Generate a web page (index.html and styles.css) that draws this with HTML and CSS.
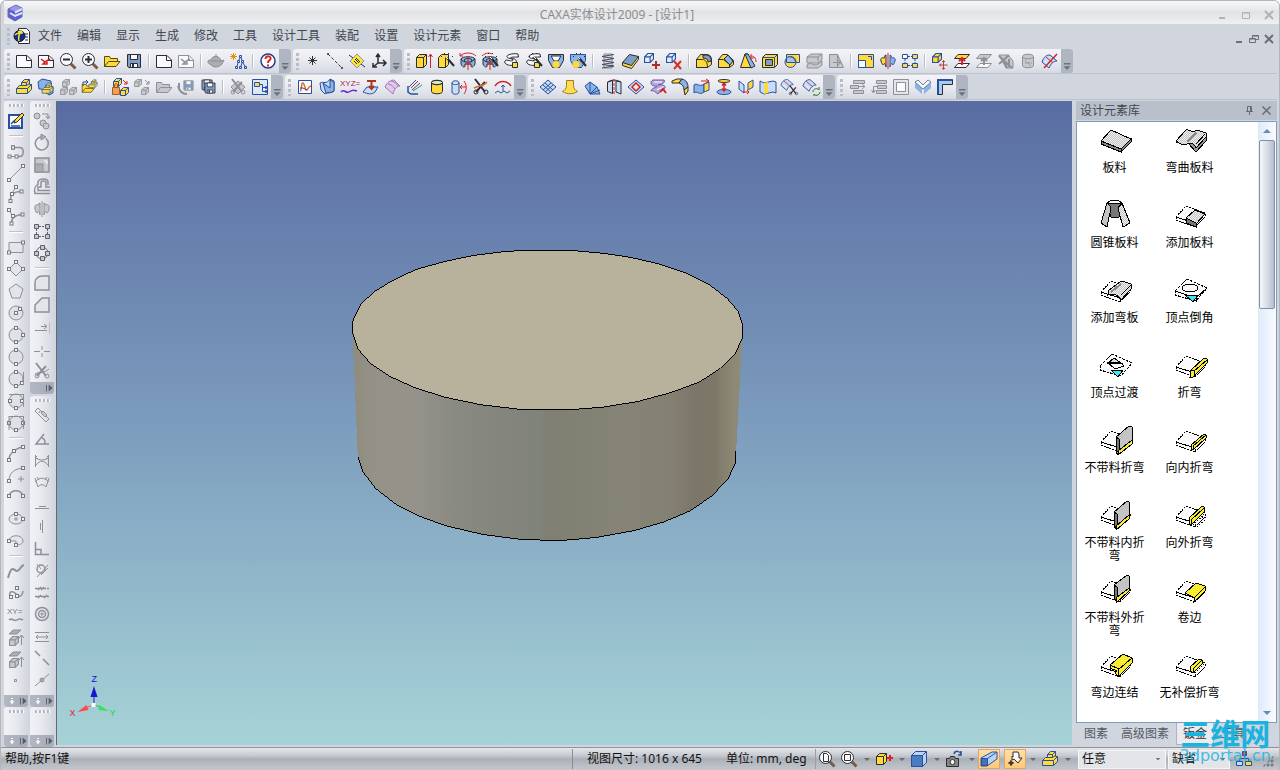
FILE: index.html
```html
<!DOCTYPE html>
<html lang="zh-CN">
<head>
<meta charset="utf-8">
<title>CAXA实体设计2009 - [设计1]</title>
<link rel="stylesheet" href="styles.css">
</head>
<body>
<svg class="defs" width="0" height="0" aria-hidden="true">
<defs>
<marker id="node" markerWidth="5" markerHeight="5" refX="2.5" refY="2.5" markerUnits="userSpaceOnUse"><rect x="1" y="1" width="3" height="3" fill="#f4f4f8" stroke="#777a80"/></marker>
<symbol id="page" viewBox="0 0 18 18"><path class="w" d="M1.500 3.500H12L16.500 8V15.500H1.500Z"/><path d="M11.500 3.500V8.500H16.500"/></symbol>
<symbol id="wand" viewBox="0 0 18 18"><path class="k2" d="M10 6L17 14"/><path class="wh" d="M9 5l2 2"/><path d="M7.500 1v2M4 4.500h2M11 1.500h2M15 4.500h2M8 8.500h1" stroke-dasharray="1 1"/></symbol>
<symbol id="cube" viewBox="0 0 9 9"><path d="M.5 3.500l3-3h5v5l-3 3h-5zM.5 3.500h5v5M5.500 3.500l3-3"/></symbol>
<symbol id="floppy" viewBox="0 0 18 18"><path class="steel" d="M2.500 2.500H15.500V15.500H3.500L2.500 14Z"/><path class="w" d="M5.500 2.500h7v5h-7z"/><path class="w" d="M5.500 11.500h7v4h-7z"/><path class="k2" d="M8 12v3"/></symbol>
<symbol id="folder" viewBox="0 0 18 18"><path d="M1.500 14.500V4.500h5l1 2h7v3"/><path d="M1.500 14.500L5.500 9.500H17L13 14.500Z"/></symbol>
<symbol id="ring" viewBox="0 0 18 18"><path class="bl" d="M2 7c1-3 13-3 14 0v5c-1 3-4 4-4 2v-2H6v2c0 2-3 1-4-2z"/><path d="M5 8c2-2 6-2 8 0l-1 2H6zM2 7c1 2 2 2 4 3M16 7l-4 3"/></symbol>
<symbol id="sweep" viewBox="0 0 18 18"><path class="w" d="M15 2C9 1 3 3 4 5s6 1 6 3-5 0-7 0L1.500 10c1 3 6 4 9 3s4-5 1-6-4 0-4-1 4-1 8-1z"/><path class="y" d="M9.500 10.500h5v5h-5z"/></symbol>
<symbol id="plane" viewBox="0 0 18 18"><path d="M1.500 6.500L5 2.500h11.500L13 6.500Z"/><path class="w" d="M1.500 15.500L5 11.500h11.500L13 15.500Z"/></symbol>
<symbol id="cyl" viewBox="0 0 18 18"><path d="M3.500 4.500v9c0 3 11 3 11 0v-9c0-3-11-3-11 0c0 3 11 3 11 0"/></symbol>
<symbol id="block" viewBox="0 0 18 18"><path fill="#ffda38" stroke="#2850a0" d="M1.500 10.500l3-3h2v-3l3-3h5v5h2v5l-4 4h-11z"/><path stroke="#2850a0" fill="none" d="M1.500 10.500h11v5M12.500 10.500l4-4M6.500 7.500v-3h5v3h-5M11.500 4.500l3-3M11.500 7.500l3-2"/></symbol>
<symbol id="surf" viewBox="0 0 18 18"><path class="sky nb" d="M1 10C3 4 6 3 9 3l7 6c-3 0-6 2-8 7z"/><path class="r" d="M5 5l7 6"/><path class="wh" d="M4 9l4 4"/></symbol>
<symbol id="cut" viewBox="0 0 18 18"><path class="k2" d="M3 1L13 14M13 4L4 14"/><circle cx="4" cy="14" r="2"/><circle cx="14" cy="14" r="2"/></symbol>
<symbol id="pcirc" viewBox="0 0 18 18"><circle cx="9" cy="9" r="7" fill="#e0e1e5"/></symbol>
<symbol id="mag" viewBox="0 0 18 18"><path stroke="#7a5b48" stroke-width="3" d="M11.500 11.500l5 5"/><circle class="w" cx="7.500" cy="7.500" r="6"/></symbol>
<symbol id="sheet" viewBox="0 0 34 32"><path class="w" d="M3 18L13 7L32 14L22 24ZM3 18v3l19 7v-4L3 18M22 28l10-10v-4" stroke-dasharray="2 1"/></symbol>
<pattern id="dots" width="2" height="2" patternUnits="userSpaceOnUse"><rect width="2" height="2" fill="#c4c4c4"/><path d="M0 0h1v1H0zM1 1h1v1H1z" fill="#eee"/></pattern>
<pattern id="ydots" width="2" height="2" patternUnits="userSpaceOnUse"><rect width="2" height="2" fill="#fff020"/><path d="M0 0h1v1H0z" fill="#e6dc60"/></pattern>
<linearGradient id="side" gradientUnits="userSpaceOnUse" x1="67" y1="0" x2="1237" y2="0"><stop offset="0" stop-color="#8f8c7c"/><stop offset=".05" stop-color="#949288"/><stop offset=".17" stop-color="#94928a"/><stop offset=".28" stop-color="#888981"/><stop offset=".48" stop-color="#80837a"/><stop offset=".5" stop-color="#7f8072"/><stop offset=".7" stop-color="#858476"/><stop offset=".81" stop-color="#848172"/><stop offset=".88" stop-color="#7c766a"/><stop offset=".93" stop-color="#7e786a"/><stop offset=".97" stop-color="#8c8674"/><stop offset="1" stop-color="#918c7b"/></linearGradient>
</defs>
</svg>

<div class="app">
<header class="titlebar">
  <svg class="ic" width="18" height="18"><path fill="#9a9be8" stroke="#6a6cc8" d="M2 5l8-4 6 3-7 4z"/><path fill="#5c5fc8" stroke="#6a6cc8" d="M2 5l7 3v9l-7-4zM16 4l-7 4v9l7-4z"/><path stroke="#e4e4ff" stroke-width="2" d="M9 8.500l7-3.500M4 9l5 3 7-3"/></svg>
  <h1>CAXA实体设计2009 - [设计1]</h1>
  <div class="winctl">
    <button aria-label="最小化"><svg class="ic" width="10" height="10"><path d="M1 8h6" stroke-width="2"/></svg></button>
    <button aria-label="最大化"><svg class="ic" width="10" height="10"><path d="M1.500 2.500h7v6h-7zM1 3h8"/></svg></button>
    <button aria-label="关闭"><svg class="ic" width="10" height="10"><path stroke-width="2" d="M1 1l8 8M9 1l-8 8"/></svg></button>
  </div>
</header>

<nav class="menubar" aria-label="主菜单">
  <i class="grip"></i>
  <svg class="ic" width="18" height="18"><path class="w" d="M5.500 1.500h8l3 3v12h-11z"/><path d="M12 7h3M12 10h3M12 13h3"/><circle cx="6.500" cy="9" r="5.500" fill="#182a88" stroke="#10184c"/><path stroke="#f0e428" stroke-width="1.500" d="M2 8c3-3 5-1 8-3M6 14c-1-4 0-7 2-10M5 5l3-1 1 3"/></svg>
  <div class="menus"><button>文件</button><button>编辑</button><button>显示</button><button>生成</button><button>修改</button><button>工具</button><button>设计工具</button><button>装配</button><button>设置</button><button>设计元素</button><button>窗口</button><button>帮助</button></div>
  <div class="mdictl">
    <button aria-label="最小化文档"><svg class="ic" width="10" height="10"><path d="M2 8h6" stroke-width="2"/></svg></button>
    <button aria-label="还原文档"><svg class="ic" width="10" height="10"><path d="M3.500 4V1.500h6v4H7M3 2h7M.5 4.500h6v4h-6zM1 5h5"/></svg></button>
    <button aria-label="关闭文档"><svg class="ic" width="10" height="10"><path stroke-width="2" d="M1 1l8 8M9 1l-8 8"/></svg></button>
  </div>
</nav>

<div class="toolrow">
  <div class="bar" role="toolbar" aria-label="标准"><i class="grip"></i>
    <button aria-label="新建"><svg class="ic"><use href="#page"/></svg></button>
    <button aria-label="新建设计"><svg class="ic"><use href="#page"/><path stroke="#d81818" stroke-width="1.500" d="M4 7l4 3 5-3M8 10l-2 2h4v-2"/></svg></button>
    <button aria-label="缩小"><svg class="ic"><use href="#mag"/><path stroke-width="2" d="M4 7.500h7"/></svg></button>
    <button aria-label="放大"><svg class="ic"><use href="#mag"/><path stroke-width="2" d="M4 7.500h7M7.500 4v7"/></svg></button>
    <button aria-label="打开"><svg class="ic y brn"><use href="#folder"/></svg></button>
    <button aria-label="保存"><svg class="ic"><use href="#floppy"/></svg></button>
    <i class="sep"></i>
    <button aria-label="新页"><svg class="ic"><use href="#page"/></svg></button>
    <button aria-label="页面检查"><svg class="ic off"><use href="#page"/><path stroke-width="1.500" d="M4 7l4 3 5-3M8 10l-2 2h4v-2"/></svg></button>
    <i class="sep"></i>
    <button aria-label="渲染"><svg class="ic off"><path class="gf2" d="M2 8c-2 1-1 4 1 4 3 4 9 4 12 0l2-4-3 1C13 3 5 3 4 8z"/><path d="M9 2v3M4 9h10"/></svg></button>
    <button aria-label="场景树"><svg class="ic nb"><path stroke="#e09010" d="M4.500 1v7M1 4.500h7M2 2l5 5M7 2L2 7"/><path d="M10.500 3.500h2v2h-2zM8.500 8.500h2v2h-2zM12.500 8.500h2v2h-2zM6.500 14.500h2v2h-2zM10.500 14.500h2v2h-2zM15.500 14.500h2v2h-2zM11 6l-1 2M12 6l1 2M9 11l-1 3M14 11l2 3M13 11l-1 3"/></svg></button>
    <i class="sep"></i>
    <button aria-label="帮助"><svg class="ic"><circle cx="9" cy="9" r="7" fill="#fff" stroke="#253e88" stroke-width="1.500"/><path stroke="#e02020" stroke-width="2" d="M6.500 7c0-4 6-3 5 0-.5 1.500-2.500 1.500-2.500 4M9 12.500v2"/></svg></button>
    <button class="more" aria-label="更多按钮"></button></div>
  <div class="bar" role="toolbar" aria-label="参考"><i class="grip"></i>
    <button aria-label="点"><svg class="ic"><path d="M8.500 4v9M4 8.500h9M5.500 5.500l6 6M11.500 5.500l-6 6"/></svg></button>
    <button aria-label="线"><svg class="ic"><path stroke-dasharray="3 2" d="M2 2l14 14"/><path d="M1.500 1.500h1v1h-1zM15.500 15.500h1v1h-1z"/></svg></button>
    <button aria-label="面"><svg class="ic"><path fill="#ffe428" stroke="#8090c8" d="M2 9l7-7 7 7-7 7z"/><path d="M1 3l4 3M13 12l4 3M7 7l4 4M8 6l4 4M6 9l3 3"/></svg></button>
    <button aria-label="坐标系"><svg class="ic"><path stroke-width="1.500" d="M8 3v8l-5 4M8 11h8M6 5l2-3 2 3M13 8l3 3-3 3M3 11v4h4"/></svg></button>
    <button class="more" aria-label="更多按钮"></button></div>
  <div class="bar" role="toolbar" aria-label="特征"><i class="grip"></i>
    <button aria-label="拉伸"><svg class="ic"><path class="y" d="M1.500 5.500l3-3h7v10l-3 3h-7z"/><path d="M1.500 5.500h7v10M8.500 5.500l3-3"/><path class="r" d="M15.500 16V3M13.500 5l2-3 2 3"/></svg></button>
    <button aria-label="拉伸向导"><svg class="ic"><path class="y" d="M1.500 5.500l3-3h7v10l-3 3h-7z"/><path d="M8.500 5.500v10"/><use href="#wand"/></svg></button>
    <button aria-label="旋转"><svg class="ic"><use href="#ring"/><path class="r" d="M1 4c4-4 12-4 16 0M1 1v3h3M9 5v13M7 12h5"/></svg></button>
    <button aria-label="旋转向导"><svg class="ic"><use href="#ring"/><path class="r" d="M1 4c4-4 8-3 10-2M9 5v13M6 12h6"/><use href="#wand"/></svg></button>
    <button aria-label="扫描"><svg class="ic"><use href="#sweep"/></svg></button>
    <button aria-label="扫描向导"><svg class="ic"><use href="#sweep"/><use href="#wand"/></svg></button>
    <button aria-label="放样"><svg class="ic"><path class="bl" d="M1.500 2.500h15v6l-4 7h-7l-4-7z"/><path class="w" d="M4 4h10l-3 5H7z"/><circle class="y n" cx="9" cy="12.500" r="3.500"/></svg></button>
    <button aria-label="放样向导"><svg class="ic"><path class="bl nb" d="M1.500 2.500h15v6l-4 7h-7l-4-7z"/><circle class="y n" cx="7" cy="12.500" r="3.500"/><use href="#wand"/></svg></button>
    <i class="sep"></i>
    <button aria-label="螺纹"><svg class="ic"><path fill="#d4dcea" stroke="#889" d="M5 2h8v14H5z"/><path stroke="#444b58" d="M3 4.500l12 -2M3 8.500l12-2M3 12.500l12-2M3 16l12-2M3 4.500l12 2M3 8.500l12 2M3 12.500l12 1.500"/></svg></button>
    <button aria-label="加厚"><svg class="ic"><path class="y" d="M1.500 10.500v3l9 3 7-9v-3z"/><path class="steel" d="M1.500 10.500l7-8 9 2-7 9z"/></svg></button>
    <button aria-label="添加零件"><svg class="ic"><g class="nb pale"><use href="#cube" width="10" height="10" x="1" y="1"/></g><path stroke="#a83028" stroke-width="2" d="M13 9v8M9 13h8"/></svg></button>
    <button aria-label="移除零件"><svg class="ic"><g class="nb pale"><use href="#cube" width="10" height="10" x="1" y="1"/></g><path stroke="#d83028" stroke-width="2" d="M9 9l7 8M16 9l-7 8"/></svg></button>
    <i class="sep"></i>
    <button aria-label="圆角过渡"><svg class="ic"><path class="y" d="M1.500 7.500l4-5h6c3 0 5 2 5 5v5l-4 3h-11z"/><path class="steel" d="M8 3h3c3 0 5 2 5 6l-3 1c0-3-2-4-5-4z"/><path d="M1.500 7.500h6c3 0 5 3 5 8M1.500 7.500v8"/></svg></button>
    <button aria-label="边倒角"><svg class="ic"><path class="y" d="M1.500 7.500l4-5h5l6 6v4l-4 3h-11z"/><path class="bl" d="M7 7l4-4 5 6-3 4z"/><path d="M1.500 7.500h5l6 5v3M1.500 7.500v8"/></svg></button>
    <button aria-label="面拔模"><svg class="ic"><path class="y" d="M1.500 15.500L6 2h3l3 13.500z"/><path class="bl" d="M6 2h3l7 12-4 2z"/><path class="r" d="M12 4c4 0 5 3 5 6M12 2v4h3"/></svg></button>
    <button aria-label="抽壳"><svg class="ic"><path class="y" d="M1.500 5.500l3-3h12v10l-3 3h-12z"/><path class="steel" d="M4.500 7.500h7v6h-7z"/><path class="nb" d="M1.500 5.500h12v10M13.500 5.500l3-3"/></svg></button>
    <button aria-label="布尔"><svg class="ic nb y"><path d="M3.500 2.500h13v8h-13z"/><circle cx="7.500" cy="10" r="5.500"/><path fill="#a8c4ec" d="M3.500 6c3-3 9 0 9 4.500h-9z"/></svg></button>
    <button aria-label="分割零件"><svg class="ic off gf"><path d="M2 5l4-3h11v6l-4 3H2zM2 5h11v4M13 5l4-3M2 13c4-4 7 2 11-1l4-3v4l-4 3H2z"/></svg></button>
    <button aria-label="截面"><svg class="ic off"><path class="gf" d="M2.500 15.500V2.500h8v13zM10.500 2.500l6 13h-6"/><path d="M6 10.500h8M11 8l3 2.500-3 2.500"/></svg></button>
    <i class="sep"></i>
    <button aria-label="缩放"><svg class="ic nb"><path class="y" d="M1.500 2.500h15v13h-15z"/><path class="w" d="M1.500 8.500h7v7h-7z"/><path d="M11 4.500h3.500V8"/></svg></button>
    <button aria-label="镜像"><svg class="ic"><path class="y" d="M7 3C5 3 6 7 5 6S1 6 2 9s2 5 3 3 2 3 2 3z"/><path class="bl nb" d="M11 3c2 0 1 4 2 3s4 0 3 3-2 5-3 3-2 3-2 3z"/><path class="r" d="M9 1v16"/></svg></button>
    <button aria-label="阵列"><svg class="ic nb"><path class="w" d="M1.500 2.500h5v4h-5z"/><path class="y" d="M11.500 2.500h5v4h-5zM1.500 11.500h5v4h-5zM11.500 11.500h5v4h-5z"/><path d="M7 4.500h4M4 7v4M14 7v4M7 13.500h4" stroke-dasharray="2 1"/></svg></button>
    <i class="sep"></i>
    <button aria-label="移动面"><svg class="ic"><g class="nb y"><use href="#cube" width="10" height="10" x="1" y="1"/></g><path stroke="#b84038" d="M12.500 9v8M8.500 13h8M11 10l1.500-1.500L14 10M11 16l1.500 1.500L14 16M10 11.500L8.500 13l1.500 1.500"/></svg></button>
    <button aria-label="匹配面"><svg class="ic y"><use href="#plane"/><path class="r k2" d="M9 13V6M6 9l3-3 3 3" fill="none"/></svg></button>
    <button aria-label="偏移面"><svg class="ic off gf"><use href="#plane"/><path class="k2" d="M9 13V6M6 9l3-3 3 3"/></svg></button>
    <button aria-label="删除面"><svg class="ic off"><path class="gf" d="M2 3h9l5 6v7h-7z"/><path class="k2" d="M2 4l13 12M2 12L12 3M10 16L6 7M12 7v8"/></svg></button>
    <button aria-label="圆柱面"><svg class="ic off gf"><use href="#cyl"/><path stroke-dasharray="2 1" d="M6 8l6 6M6 11h7"/></svg></button>
    <button aria-label="编辑面"><svg class="ic"><use href="#surf"/><path class="r" stroke-width="1.500" d="M3 16L16 2"/></svg></button>
    <button class="more" aria-label="更多按钮"></button></div>
</div>

<div class="toolrow">
  <div class="bar" role="toolbar" aria-label="装配"><i class="grip"></i>
    <button aria-label="创建零件"><svg class="ic"><use href="#block"/></svg></button>
    <button aria-label="装配"><svg class="ic"><path class="bl nb" d="M1 4l4-3 9 2v5l2 1v6l-4 2-8-6H2z"/><use href="#block" x="4" y="4" width="13" height="13"/></svg></button>
    <button aria-label="解除装配"><svg class="ic off gf"><use href="#cube" x="3" y="1" width="8" height="8"/><use href="#cube" x="1" y="9" width="8" height="8"/><use href="#cube" x="10" y="9" width="8" height="8"/></svg></button>
    <button aria-label="插入零件"><svg class="ic"><g class="y brn"><use href="#folder" y="3" width="14" height="14"/></g><use href="#block" x="7" y="1" width="10" height="10"/><path class="nb" d="M2 8V4h5M5 2l2 2-2 2"/></svg></button>
    <i class="sep"></i>
    <button aria-label="锁定零件"><svg class="ic"><g class="y nb"><use href="#cube" x="2" y="0" width="9" height="9"/><use href="#cube" x="9" y="9" width="9" height="9"/></g><path stroke="#a85820" fill="#f0a050" d="M1.500 9.500h7v7h-7zM3.500 9V7c0-2 3-2 3 0v2"/><path class="r" d="M12 2l4 4M16 3v3h-3"/></svg></button>
    <button aria-label="取消链接"><svg class="ic off gf"><use href="#cube" x="1" y="1" width="8" height="8"/><use href="#cube" x="8" y="9" width="8" height="8"/><path d="M12 2l4 4M16 3v3h-3"/></svg></button>
    <button aria-label="打开零件"><svg class="ic off gf"><use href="#folder"/></svg></button>
    <button aria-label="另存零件"><svg class="ic off"><use href="#floppy" x="5" y="1" width="13" height="13"/><path class="k2" d="M1 8c1 4 4 8 9 8M2 5v6"/></svg></button>
    <button aria-label="全部保存"><svg class="ic"><use href="#floppy" x="1" y="0" width="14" height="14"/><use href="#floppy" x="4" y="3" width="14" height="14"/></svg></button>
    <i class="sep"></i>
    <button aria-label="分离"><svg class="ic off"><path class="gf" d="M2 9l7-6 7 6-7 7z"/><use href="#cut"/></svg></button>
    <button aria-label="结构树"><svg class="ic nb"><path fill="#dbe8fa" d="M1.500 1.500h15v15h-15z"/><path class="y" d="M3.500 4.500h5v4h-5z"/><path d="M9 6.500h2.500v7H14M11.500 9.500H14M14.500 8.500h1v2h-1zM14.500 12.500h1v2h-1z"/></svg></button>
    <button class="more" aria-label="更多按钮"></button></div>
  <div class="bar" role="toolbar" aria-label="曲线"><i class="grip"></i>
    <button aria-label="曲线"><svg class="ic nb"><path class="w" d="M2.500 2.500h13v13h-13z"/><path stroke="#e07020" stroke-width="1.500" d="M4 13C6 13 5 4 7 5s2 8 4 7 1-4 4-4"/><path d="M4 10h3l4 2"/></svg></button>
    <button aria-label="曲面曲线"><svg class="ic nb"><path class="sky" d="M2 5c4-2 6 2 10-4l4 2v10c-3 3-7 1-9 3L3 12z"/><path class="bl" d="M5 5l7 5V2l4 2v9c-3 2-6 1-8 2z"/></svg></button>
    <button aria-label="公式曲线"><svg class="ic"><text x="0" y="8" class="tiny red">XYZ=</text><path stroke="#7020c8" stroke-width="1.500" d="M1 14c3-4 5 2 8 0s4-2 8-1"/></svg></button>
    <button aria-label="投影曲线"><svg class="ic"><path class="sky nb" d="M1 14l4-5h11l-3 5c-4 3-7 2-12 0z"/><path stroke="#a83820" stroke-width="2" d="M5 3h9M9.500 3v8M7 8l2.500 3L12 8"/></svg></button>
    <button aria-label="等参线"><svg class="ic"><path fill="#e4c8ec" stroke="#9878b8" d="M1 9c2-5 6-7 9-7l6 6c-3 0-6 3-7 8z"/><path stroke="#9878b8" d="M4 6c3 0 6 3 7 5M7 3c3 0 6 3 7 5"/></svg></button>
    <button aria-label="组合曲线"><svg class="ic nb"><path stroke-width="1.500" d="M2 8v6l3 2h7"/><path d="M3 9l7-7M6 12l8-7"/><path class="r" d="M5 10l7-7"/><path stroke="#30a050" d="M7 13l9-6"/></svg></button>
    <button aria-label="交线"><svg class="ic y"><use href="#cyl"/><ellipse cx="9" cy="4.500" rx="5.500" ry="2" fill="#d8f0d0"/></svg></button>
    <button aria-label="包裹曲线"><svg class="ic nb"><path class="sky" d="M2 5c0-3 7-3 7 0v9c0 3-7 3-7 0zM2 5c0 2 7 2 7 0"/><path class="r" d="M11 9h5M14 3c3 4 3 9 0 13M12 7l-2 2 2 2"/></svg></button>
    <button aria-label="裁剪"><svg class="ic"><use href="#cut"/><path stroke="#e07020" stroke-width="1.500" d="M2 10c5-3 8 0 13-6"/></svg></button>
    <button aria-label="桥接曲线"><svg class="ic"><path class="r" stroke-width="1.500" d="M1 8c4-6 12-6 16 0"/><path class="nb" d="M9 13V7M7 9l2-2 2 2M1 15l3-2 3 2 3-2 3 2 3-2"/></svg></button>
    <button class="more" aria-label="更多按钮"></button></div>
  <div class="bar" role="toolbar" aria-label="曲面"><i class="grip"></i>
    <button aria-label="网格面"><svg class="ic nb"><path class="sky" d="M1 9l8-7 8 7-8 7z"/><path d="M4 7l8 7M6 5l8 7M12 5l-8 7M14 7l-8 7"/></svg></button>
    <button aria-label="放样面"><svg class="ic"><path fill="#ffdc50" stroke="#a07820" d="M5.500 2.500h7v5c0 3 2 5 4 6-5 3-10 3-15 0 2-1 4-3 4-6z"/></svg></button>
    <button aria-label="直纹面"><svg class="ic nb"><path class="bl" d="M2 8l5-4 7 5 3 7H7z"/><path d="M7 16V4M7 16l7-7M7 16l10-4"/></svg></button>
    <button aria-label="旋转面"><svg class="ic"><path class="sky" d="M2.500 4l5-1.500v13l-5-2zM11 3l5 1v12l-5-2z"/><path d="M3 4c4-3 9-2 13 0"/><path class="r" d="M9 1v16" stroke-dasharray="3 1"/></svg></button>
    <button aria-label="偏移曲面"><svg class="ic"><path class="sky nb" d="M1 9l8-7 8 7-8 7z"/><path fill="#f4e8e8" stroke="#d02020" stroke-width="1.500" d="M5 9l4-4 4 4-4 4z"/></svg></button>
    <button aria-label="导动面"><svg class="ic"><path fill="#b8a8dc" stroke="#6858a8" d="M4 2h11c2 3-3 4-6 5 6-1 9 2 6 4s-5 3-6 5C5 13 4 12 2 13c1-4 7-3 6-5-6 1-8-4-4-6z"/><path class="wh" d="M5 4h8M8 12c3-3 6-1 6-4"/><path class="r k2" d="M11 14l3-3 3 4"/></svg></button>
    <button aria-label="圆角面"><svg class="ic"><path class="y" d="M1 3l5-2h5l-3 4H1z"/><path class="bl" d="M8 5l3-4c4 1 6 4 6 8l-4 3c0-4-2-6-5-7z"/><path class="y" d="M13 12l4-3v4l-3 4z"/></svg></button>
    <button aria-label="曲面延伸"><svg class="ic nb"><path class="bl" d="M1 7c3-3 5 3 10-1v8c-5 4-7-2-10 1z"/><path class="y" d="M11 6l5-2v8l-5 2z"/><path class="r" d="M8 3h8M13 1l3 2-3 2"/></svg></button>
    <button aria-label="填充面"><svg class="ic"><ellipse class="y" cx="9" cy="3" rx="6" ry="1.500"/><ellipse class="bl nb" cx="9" cy="14" rx="7" ry="2.500"/><path class="r" stroke-width="1.500" d="M9 5v8M7 7.500L9 5l2 2.500M7 10.500L9 13l2-2.500"/></svg></button>
    <button aria-label="缝合"><svg class="ic nb"><path class="sky" d="M2 3l5 4v8l-5-4z"/><path class="y" d="M11 5l5-3v7l-5 3z"/><path class="r" d="M6 14h6M10 12l2 2-2 2"/></svg></button>
    <button aria-label="修补曲面"><svg class="ic nb"><path class="sky" d="M1 3l4 2 9-2 3 1v11l-3-1-9 2-4-2z"/><path class="y n" d="M5 5l4-1v11l-4 1z"/></svg></button>
    <button aria-label="裁剪曲面"><svg class="ic"><use href="#surf" x="-1" y="-1" width="15" height="15"/><use href="#cut" x="7" y="7" width="11" height="11"/></svg></button>
    <button aria-label="恢复曲面"><svg class="ic"><use href="#surf" x="-1" y="-1" width="16" height="16"/><path stroke="#3a7020" d="M10 14c0-4 5-4 6-2V9M17 14c-1 4-5 4-6 2v2"/></svg></button>
    <button class="more" aria-label="更多按钮"></button></div>
  <div class="bar" role="toolbar" aria-label="钣金"><i class="grip"></i>
    <button aria-label="展开钣金"><svg class="ic off"><path class="gf" d="M5.500 2.500h11v3h-11zM2.500 7.500h8v3h-8zM5.500 12.500h10v3h-10z"/><path d="M11 8.500h5M14 6l3 2.500-3 2.500"/></svg></button>
    <button aria-label="还原钣金"><svg class="ic off"><path class="gf" d="M6.500 2.500h10v3h-10zM7.500 7.500h9v3h-9zM6.500 12.500h10v3h-10z"/><path d="M8 8.500H3.500V14M1.500 12l2 3 2-3"/></svg></button>
    <button aria-label="钣金切割"><svg class="ic off"><path class="gl" d="M1.500 1.500h15v15h-15z"/><path class="w" d="M4.500 4.500h9v9h-9z"/></svg></button>
    <button aria-label="封闭角"><svg class="ic"><path class="bl n" d="M1 4l7 6v6L1 10zM17 4l-7 6v6l7-6z"/><path class="w" stroke="#68809c" d="M1 4l3-2 5 5 5-5 3 2-8 7z"/></svg></button>
    <button aria-label="斜接法兰"><svg class="ic"><path fill="#a8ccf0" d="M1.500 1.500h15v5h-10v10h-5z"/><path class="nb k2" d="M2 2h14M2 2v14"/></svg></button>
    <button class="more" aria-label="更多按钮"></button></div>
</div>

<main class="work">
  <div class="side">
    <div class="vbar grow" role="toolbar" aria-label="二维绘图"><i class="hgrip"></i>
      <button aria-label="草图"><svg class="ic nb"><path class="w" stroke-width="2" d="M2 3h13v13H2z"/><path stroke-width="1.500" d="M4 14h9M4 12l4-4"/><path stroke="#333" class="y" d="M7 11l1-3 7-7 2 2-7 7z"/></svg></button>
      <i class="hsep"></i>
      <button aria-label="连续直线"><svg class="ic off"><path d="M9.500 14.500h3c5 0 5-9 0-9H7" stroke-width="1.500"/><path class="m" d="M2.500 14.500h7"/><path class="mk" d="M6 5.500v0"/></svg></button>
      <button aria-label="两点线"><svg class="ic off"><path class="m" d="M2 16L16 2"/></svg></button>
      <button aria-label="切线"><svg class="ic off"><path class="m" stroke-width="1.500" d="M3.500 15C3 9 7 5 14.500 5.500"/><path d="M3 10l6-9"/><path class="mk" d="M5 8L9 1"/></svg></button>
      <button aria-label="法线"><svg class="ic off"><path class="m" stroke-width="1.500" d="M4.500 15.500C4 10 8 7 15.500 6.500"/><path class="m" d="M2 2l4 6"/></svg></button>
      <i class="hsep"></i>
      <button aria-label="矩形"><svg class="ic off"><path class="gl" d="M2 4.500h14v10H2z"/><path class="mk" d="M2 14.500L16 4.500"/></svg></button>
      <button aria-label="三点矩形"><svg class="ic off"><path class="gl" d="M2 9l7-7 7 7-7 7z"/><path class="mk" d="M2 9L9 2L16 9"/></svg></button>
      <button aria-label="多边形"><svg class="ic off"><path class="gl" d="M9 2l7 5-3 9H5L2 7z"/></svg></button>
      <button aria-label="圆心圆"><svg class="ic off"><use href="#pcirc"/><path class="m" d="M9 9l4-4"/></svg></button>
      <button aria-label="两点圆"><svg class="ic off"><use href="#pcirc"/><path class="mk" d="M16 9L9 2L9 16"/></svg></button>
      <button aria-label="三点圆"><svg class="ic off"><use href="#pcirc"/><path class="mk" d="M9 2L9 16"/></svg></button>
      <button aria-label="一切两点圆"><svg class="ic off"><use href="#pcirc"/><path class="mk" d="M9 2L15 13L9 16"/><path d="M16.500 2v13"/></svg></button>
      <button aria-label="两切一点圆"><svg class="ic off"><use href="#pcirc"/><path class="mk" d="M3 9L15 9L9 16"/><path d="M2 2.500h14M16.500 2v13"/></svg></button>
      <button aria-label="三切圆"><svg class="ic off"><use href="#pcirc"/><path class="mk" d="M2 9L16 9L9 16"/><path d="M2 2.500h14M2 2v14M16.500 2v13"/></svg></button>
      <i class="hsep"></i>
      <button aria-label="三点圆弧"><svg class="ic off"><path class="m" stroke-width="1.500" d="M2 16C2 11 4 9 7 7S12 3 16 3"/></svg></button>
      <button aria-label="圆心圆弧"><svg class="ic off"><path class="m" d="M2 15C2 7 7 3 16 2"/><path d="M11 13h6M14 10v6"/></svg></button>
      <button aria-label="两点圆弧"><svg class="ic off"><path class="m" stroke-width="1.500" d="M2 8C4 1 14 1 16 8"/></svg></button>
      <button aria-label="椭圆"><svg class="ic off"><ellipse class="gl" cx="9" cy="9" rx="7" ry="5"/><path class="mk" d="M9 4L16 9"/><path d="M7 9h4M9 7v4"/></svg></button>
      <button aria-label="椭圆弧"><svg class="ic off"><path class="gl" d="M2 9c0-7 14-7 14 0 0 3-4 4-7 4V9z"/><path class="mk" d="M2 9L9 13"/></svg></button>
      <i class="hsep"></i>
      <button aria-label="样条"><svg class="ic off"><path stroke-width="2" d="M1 16C5 1 7 9 10 9s3-5 7-6"/></svg></button>
      <button aria-label="贝塞尔"><svg class="ic off"><path stroke-width="1.500" d="M3 13c-2-7 4-6 6-3s6 4 7-3"/><path class="mk" d="M4 13L10 4L10 12"/></svg></button>
      <button aria-label="公式曲线"><svg class="ic off"><text x="0" y="8" class="tiny">XY=</text><path stroke-width="1.500" d="M2 14c3-3 5 2 8 0s4-1 6 0"/></svg></button>
      <button aria-label="投影"><svg class="ic off"><path class="gf2" d="M2 6l4-4h8l-4 4z"/><g class="gf"><use href="#cube" x="2" y="8" width="10" height="10"/></g><path d="M14.500 17V7M12 10l2.500-3 2.500 3"/></svg></button>
      <button aria-label="关联投影"><svg class="ic off"><path class="gf2" d="M2 6l4-4h8l-4 4z"/><g class="gf"><use href="#cube" x="2" y="8" width="10" height="10"/></g><path d="M14.500 17V7M12 10l2.500-3 2.500 3"/></svg></button>
      <button aria-label="点"><svg class="ic off"><path d="M7.500 7.500h2v2h-2z"/></svg></button>
      <button class="more" aria-label="更多按钮"></button></div>
    <div class="vbar small"><i class="hgrip"></i><button class="more" aria-label="更多按钮"></button></div>
  </div>
  <div class="side">
    <div class="vbar first" role="toolbar" aria-label="二维编辑"><i class="hgrip"></i>
      <button aria-label="平移"><svg class="ic off"><circle class="gf" cx="4" cy="4" r="3"/><circle class="gf" cx="10" cy="11" r="3"/><circle class="gf" cx="13" cy="14" r="3"/><path d="M9 2h6v4M13 4l2 3 2-3"/></svg></button>
      <button aria-label="旋转"><svg class="ic off"><path stroke-width="1.500" d="M8 3a6.500 6.500 0 1 0 5 1.500"/><path class="gf2" d="M8 0l5 3-5 3z"/></svg></button>
      <button aria-label="缩放"><svg class="ic off"><path class="gf" stroke-width="1.500" d="M2 2h14v14H2z"/><path class="gf2" d="M2 8h8v8H2z"/><path class="wh" d="M11 5h3v3"/></svg></button>
      <button aria-label="偏移"><svg class="ic off"><path stroke-width="1.500" d="M17 12.500H5V9h3V4.500c0-2 5-2 5 0V9h4M17 15.500H2c-1-4 0-8 3-9V4C6 0 15 0 15 4v3"/></svg></button>
      <button aria-label="镜像"><svg class="ic off"><path class="gf" d="M7 3C5 3 6 6 5 5S1 5 2 9s2 5 3 3 2 3 2 3zM11 3c2 0 1 3 2 2s4 0 3 4-2 5-3 3-2 3-2 3z"/><path d="M9 1v16"/></svg></button>
      <button aria-label="矩形阵列"><svg class="ic mid"><path class="gf" d="M1.500 2.500h4v4h-4zM12.500 2.500h4v4h-4zM1.500 12.500h4v4h-4zM12.500 12.500h4v4h-4z"/><path d="M6 4.500h6M3.500 7v5M14.500 7v5M6 14.500h6" stroke-dasharray="2 1"/></svg></button>
      <button aria-label="圆形阵列"><svg class="ic mid"><circle cx="9" cy="9" r="6"/><path class="gf" d="M7.500 1.500h4v4h-4zM7.500 12.500h4v4h-4zM1.500 7.500h4v4h-4zM12.500 7.500h4v4h-4z"/></svg></button>
      <i class="hsep"></i>
      <button aria-label="圆角"><svg class="ic off"><path class="gl" stroke-width="1.500" d="M2 16V9c0-4 3-7 7-7h7v14z"/></svg></button>
      <button aria-label="倒角"><svg class="ic off"><path class="gl" stroke-width="1.500" d="M2 16V9l7-7h7v14z"/></svg></button>
      <button aria-label="延伸"><svg class="ic off"><path d="M8 8.500h6M11 6l3 2.500-3 2.500M2 12.500h12"/><path stroke="#bbb" d="M16.500 4v12"/></svg></button>
      <button aria-label="打断"><svg class="ic off"><path d="M1 11.500h6M11 11.500h6M9 6v4M9 13v4"/></svg></button>
      <button aria-label="裁剪"><svg class="ic off"><use href="#cut"/><path d="M2 12c5-3 8 0 14-5"/></svg></button>
      <button class="more" aria-label="更多按钮"></button></div>
    <div class="vbar grow" role="toolbar" aria-label="二维约束"><i class="hgrip"></i>
      <button aria-label="智能标注"><svg class="ic off"><path d="M2 4l3-3 11 11-3 3zM6 6l1-2"/><path class="gf" d="M8 6l2-2 4 4-2 2z"/></svg></button>
      <button aria-label="角度约束"><svg class="ic off"><path stroke-width="1.500" d="M11 5L3 15h13M9 9c3 1 3 3 3 6"/></svg></button>
      <button aria-label="弧长约束"><svg class="ic off"><path d="M2.500 4v12M15.500 4v12M2 6c4 4 10 4 14 0M3 14c4-5 8-5 12 0M4 5l-2 2 3 1M14 5l2 2-3 1"/></svg></button>
      <button aria-label="弧度约束"><svg class="ic off"><path d="M2 5l3 9M16 5l-3 9M2 9c4-5 10-5 14 0M5 14c2-3 6-3 8 0M4 4l2 3M14 4l-2 3"/></svg></button>
      <button aria-label="水平约束"><svg class="ic off"><path d="M2 13.500h14M6 11.500h7"/></svg></button>
      <button aria-label="铅垂约束"><svg class="ic off"><path d="M9.500 3v13M7.500 6v7"/></svg></button>
      <button aria-label="垂直约束"><svg class="ic off"><path stroke-width="1.500" d="M2.500 3v12.500H16M3 10.500h5V15"/></svg></button>
      <button aria-label="相切约束"><svg class="ic off"><circle cx="8" cy="8" r="4" stroke-width="1.500"/><path d="M4 16L15 4M8 14l7-7M4 3l4 5"/></svg></button>
      <button aria-label="共线约束"><svg class="ic off"><path stroke-width="1.500" d="M2 5.500h14M2 13.500h14M8 7l3-3M5 15l3-3M11 15l3-3M5 7l3-3" stroke-dasharray="5 1"/></svg></button>
      <button aria-label="同心约束"><svg class="ic off"><circle cx="9" cy="9" r="6.500" stroke-width="1.500"/><circle cx="9" cy="9" r="3.500" stroke-width="1.500"/><path d="M7 9h4M9 7v4"/></svg></button>
      <button aria-label="等长约束"><svg class="ic off"><path d="M2 5.500h14M2 14.500h14M3 10h12M5 8l-2 2 2 2M13 8l2 2-2 2"/></svg></button>
      <button aria-label="平行约束"><svg class="ic off"><path stroke-width="1.500" d="M2 2l5 5M10 10l6 6"/></svg></button>
      <button aria-label="中点约束"><svg class="ic off"><path d="M2 15L16 3"/><circle class="gf2" cx="9" cy="9" r="2"/></svg></button>
      <button class="more" aria-label="更多按钮"></button></div>
    <div class="vbar small"><i class="hgrip"></i><button class="more" aria-label="更多按钮"></button></div>
  </div>

  <section class="viewport" aria-label="设计环境">
    <svg viewBox="57 101 1014 644" preserveAspectRatio="xMidYMid meet">
      <g transform="translate(330 230) scale(.33333)" shape-rendering="crispEdges">
        <path fill="url(#side)" d="M66 305L82 682L97 725L135 775L195 822L268 859L345 887L455 913L560 927L650 931L700 931L800 922L910 902L1000 876L1080 842L1145 797L1192 747L1214 702L1217 660L1237 305Z"/>
        <path fill="#b8b19c" stroke="#000" stroke-width="3" d="M65 305L68 268L92 220L135 183L185 152L255 119L340 95L430 76L520 65L580 61L730 62L820 70L900 82L990 103L1070 130L1135 163L1190 205L1222 243L1237 285L1237 320L1215 370L1170 415L1105 457L1020 488L920 515L820 531L735 538L568 538L450 524L345 502L255 474L180 440L120 400L82 357Z"/>
        <path fill="none" stroke="#000" stroke-width="3" d="M82 680L97 725L135 775L195 822L268 859L345 887L455 913L560 927L650 931L700 931L800 922L910 902L1000 876L1080 842L1145 797L1192 747L1214 702L1216 662"/>
      </g>
      <g class="axes">
        <path stroke="#2020d0" d="M93.500 704V694"/><path fill="#1818c8" d="M90 697l3.500-11 3.500 11z"/>
        <path stroke="#f06060" d="M93 705l-8 3"/><path fill="#ff4a4a" d="M77 712l9-7 2 5z"/>
        <path stroke="#20c060" d="M94 705l8 3"/><path fill="#30e850" d="M108 711l-9-6-1 5z"/>
        <path fill="#fff" d="M91 703h4v4h-4z"/>
        <text x="91" y="682" fill="#1010d0">Z</text><text x="69" y="716" fill="#e82020">X</text><text x="109" y="716" fill="#10e040">Y</text>
      </g>
    </svg>
  </section>

  <aside class="catalog">
    <div class="cathead"><h2>设计元素库</h2>
      <button aria-label="自动隐藏"><svg class="ic" width="11" height="11"><path d="M3.500 6V1.500h4V6M2 6.500h7M5.500 7v3M6.500 2v4"/></svg></button>
      <button aria-label="关闭面板"><svg class="ic" width="11" height="11"><path stroke-width="1.500" d="M1.500 1.500l8 8M9.500 1.500l-8 8"/></svg></button></div>
    <div class="catbody">
      <div class="parts">
        <button><svg class="ic"><path fill="#888" d="M3 17l20 8v3L3 20zM23 25l10-10v3L23 28z"/><path fill="url(#dots)" d="M3 17L13 6l20 9-10 10z"/></svg><span>板料</span></button>
        <button><svg class="ic"><path fill="#999" d="M3 18l8 3 4-2 8 9 10-11v-4L15 14z"/><path fill="url(#dots)" d="M3 17L13 6c5-1 4 3 9 1 4-2 6 1 11 2v4L23 24c-2-5-6-6-9-4s-7 0-11-3z"/><path stroke="#888" stroke-width="2" d="M14 18l9-9"/><path d="M23 20l9-10"/></svg><span>弯曲板料</span></button>
        <button><svg class="ic"><path fill="#777" d="M9 4h15l-3 14h-8z"/><path fill="#c4c4c4" d="M9 4c1 2 4 3 4 5L9 28l-6-4z"/><path fill="url(#dots)" d="M24 4c-1 2-3 3-4 5l5 19 7-4z"/><path d="M9 4c4-4 11-4 15 0"/></svg><span>圆锥板料</span></button>
        <button><svg class="ic"><use href="#sheet"/><path fill="url(#dots)" d="M13 19l9-8 10 4-9 10z"/><path fill="#777" d="M13 19l10 5v4l-10-4z"/></svg><span>添加板料</span></button>
        <button><svg class="ic"><use href="#sheet"/><path fill="url(#dots)" d="M11 16l11-8c4-2 6 1 11 2v5L23 26c-2-5-8-7-13-5z"/><path stroke="#888" stroke-width="2" d="M13 18l10-8"/><path d="M23 21l10-10"/></svg><span>添加弯板</span></button>
        <button><svg class="ic"><path class="w" d="M2 17L14 5l20 9-11 13L2 21z" stroke-dasharray="3 1"/><path d="M2 17l21 7L34 14M23 24v4"/><ellipse cx="17" cy="14" rx="8" ry="4"/><path fill="#40e8e8" d="M12 21h13l-5 7z"/></svg><span>顶点倒角</span></button>
        <button><svg class="ic"><path class="w" d="M2 17L14 5l20 9-11 13L2 21z" stroke-dasharray="3 1"/><path fill="url(#dots)" d="M10 14l6-5 7 5z"/><path d="M9 13h13l4 4-9 3z"/><path fill="#40e8e8" d="M13 21h12l-5 7z"/></svg><span>顶点过渡</span></button>
        <button><svg class="ic"><use href="#sheet"/><path fill="url(#ydots)" d="M18 21L31 9l3 1v4L20 28h-3z"/><path d="M18 21l3 1v5M21 22L34 11"/></svg><span>折弯</span></button>
        <button><svg class="ic"><use href="#sheet"/><path fill="#c4c4c4" d="M18 13L31 2l3 1v17L20 31l-2-3z"/><path fill="#777" d="M18 13l3 2v14l-3-3z"/><path fill="url(#ydots)" d="M20 27l14-11v4L20 31z"/></svg><span>不带料折弯</span></button>
        <button><svg class="ic"><use href="#sheet"/><path fill="url(#ydots)" d="M18 21L31 10l2 1v3L20 26l-2-1z"/><path d="M20 22L33 11M20 22v4"/></svg><span>向内折弯</span></button>
        <button><svg class="ic"><use href="#sheet"/><path fill="#c4c4c4" d="M16 13L29 2l2 1v17L18 30l-2-3z"/><path fill="#777" d="M16 13l3 2v14l-3-3z"/><path fill="url(#ydots)" d="M18 27l13-11v4L18 31z"/></svg><span>不带料内折弯</span></button>
        <button><svg class="ic"><use href="#sheet"/><path fill="url(#ydots)" d="M16 19L29 7l2 1v5L18 26l-2-1z"/><path d="M18 21L31 9M18 21v5"/><path stroke-dasharray="1 2" d="M20 26l12-10v5L22 29"/></svg><span>向外折弯</span></button>
        <button><svg class="ic"><use href="#sheet"/><path fill="#c4c4c4" d="M16 11L29 1l2 1v13L18 27l-2-3z"/><path fill="#777" d="M16 11l3 2v14l-3-3z"/><path fill="url(#ydots)" d="M18 24l13-10v3L18 29z"/></svg><span>不带料外折弯</span></button>
        <button><svg class="ic"><use href="#sheet"/><path fill="url(#ydots)" d="M12 19l11-10 9 3v5L21 28l1-4z"/><path d="M22 23l10-10"/></svg><span>卷边</span></button>
        <button><svg class="ic"><use href="#sheet"/><path fill="url(#ydots)" d="M12 16L25 5l9 4v5L20 28l-3-4 2-2-7-3z"/><path d="M12 16l9 4L34 9M21 20l-1 8"/></svg><span>弯边连结</span></button>
        <button><svg class="ic"><use href="#sheet"/><path fill="url(#ydots)" d="M17 18l9-8 3 1v4l-9 9-3-2z"/><path d="M20 20l9-9M20 20v4"/></svg><span>无补偿折弯</span></button>
      </div>
      <div class="scroll"><button class="up" aria-label="向上滚动"></button><div class="thumb"></div><button class="down" aria-label="向下滚动"></button></div>
    </div>
    <div class="tabs"><button>图素</button><button>高级图素</button><button class="on">钣金</button><button>工具</button></div>
  </aside>
</main>

<footer class="status">
  <span class="hint">帮助,按F1键</span>
  <div class="info"><span>视图尺寸: 1016 x 645</span><span>单位: mm, deg</span></div>
  <div class="views">
    <button aria-label="缩放全部"><svg class="ic"><use href="#mag"/><path class="w" d="M5.500 3.500h3l2 2v6h-5z"/></svg></button>
    <button aria-label="窗口缩放"><svg class="ic"><use href="#mag"/><path d="M4.500 4.500h6v6h-6z"/></svg></button>
    <button class="dd" aria-label="缩放选项"></button>
    <button aria-label="指定视向"><svg class="ic"><path class="y" d="M1.500 6.500l3-3h7v8l-3 3h-7z"/><path d="M1.500 6.500h7v8M8.500 6.500l3-3"/><path stroke="#e02020" stroke-width="2" d="M12 8h6M15 5v6"/></svg></button>
    <button class="dd" aria-label="视向选项"></button>
    <button aria-label="标准视图"><svg class="ic nb"><path fill="#b8d4f0" d="M1.500 5.500l4-4h11v11l-4 4h-11z"/><path fill="#4a7cc0" d="M1.500 5.500h11v11h-11z"/><path d="M12.500 5.500l4-4"/></svg></button>
    <button class="dd" aria-label="视图选项"></button>
    <button aria-label="相机"><svg class="ic"><path fill="#888" d="M1.500 8.500h3l1-2h4l1 2h3v8h-12z"/><circle class="w" cx="7.500" cy="12" r="2.500"/><path class="nb" stroke-width="1.500" d="M9 4c1-4 6-3 7 0V1M17 5h-4"/></svg></button>
    <button class="dd" aria-label="相机选项"></button>
    <button class="act" aria-label="透视"><svg class="ic nb"><path fill="#b8d4f0" d="M1 8L12 2h5v7L7 16H1z"/><path fill="#4474b8" d="M1.500 8.500h6v7h-6z"/><path d="M7.500 8.500L17 2"/></svg></button>
    <button class="act gap" aria-label="拾取"><svg class="ic"><path class="w" d="M7 2h5l1 2v4h3l-4 5-4-4-2 1V6l1 1z"/><circle cx="5" cy="13" r="1.500" fill="#e8a020"/><path d="M5 10v6M2 13h6"/></svg></button>
    <button class="dd" aria-label="拾取选项"></button>
    <button aria-label="零件"><svg class="ic"><use href="#block"/></svg></button>
    <button class="dd" aria-label="零件选项"></button>
  </div>
  <select class="s1" aria-label="拾取过滤"><option>任意</option></select>
  <select class="s2" aria-label="配置"><option>缺省</option></select>
  <button class="net" aria-label="结构"><svg class="ic nb"><path fill="#e02828" d="M7.500 1.500h4v4h-4z"/><path class="sky" d="M1.500 11.500h6v4h-6z"/><path class="y" d="M10.500 11.500h6v4h-6z"/><path d="M9.500 6v3M4.500 11V8.500h9V11"/></svg></button>
  <i class="resize"></i>
</footer>
<div class="mark"><b>三维网</b><span>3dportal.cn</span></div>
</div>
</body>
</html>
```
FILE: styles.css
```css
* { box-sizing: border-box; }
body {
  margin: 0;
  font: 12px/16px "Noto Sans", "Noto Sans CJK SC", sans-serif;
  color: #111;
}
button {
  margin: 0; padding: 0; border: 0; background: none;
  font: inherit; color: inherit;
  display: flex; align-items: center; justify-content: center;
}
h1, h2 { margin: 0; font: inherit; }
.defs { position: absolute; }

.app {
  position: relative;
  display: flex; flex-direction: column;
  height: 100vh; padding: 0 2px 0 3px;
  overflow: hidden;
  background: #d0d5de;
  border: 1px solid #b4b6ba; border-bottom: 0;
  border-radius: 6px 6px 0 0;
}

/* icon paint */
.ic { fill: none; stroke: #2a2d33; flex: none; overflow: visible; }
.ic.off { stroke: #8d9096; }
.ic.mid { stroke: #5c6068; }
.w { fill: #fafafc; }
.y { fill: #ffda38; }
.bl { fill: #8bb4e6; }
.sky { fill: #c8dcf4; }
.steel { fill: #7f9fc8; }
.off .steel { fill: #b4b7bc; }
.pale { fill: #e4ecfa; }
.gf { fill: #c6c8cc; }
.gf2 { fill: #aaadb2; }
.gl { fill: #e4e5e9; }
.brn { stroke: #5a4810; }
.r { stroke: #d42028; }
.nb { stroke: #2850a0; }
.wh { stroke: #fff; }
.n { stroke: none; }
.k2 { stroke-width: 2; fill: none; }
.m { marker: url(#node); }
.mk { marker: url(#node); stroke: none; fill: none; }
.tiny { font: 8px "Liberation Sans", sans-serif; fill: #777a80; stroke: none; }
.tiny.red { fill: #a02840; }

.titlebar {
  display: flex; align-items: center;
  height: 23px; padding: 0 5px 0 2px; margin: 0 -2px 0 0;
  background: linear-gradient(#f8f8f8, #e2e3e5 50%, #eeeff0);
}
.titlebar h1 { flex: 1; text-align: center; color: #8c8d90; padding: 4px 8px 0 0; }
.winctl { display: flex; gap: 13px; padding-top: 4px; }
.winctl .ic { stroke: #b0b2b5; }

.menubar { display: flex; align-items: center; height: 24px; color: #43474f; }
.menubar > .ic { margin: 0 7px 0 0; }
.menus { display: flex; gap: 15px; flex: 1; }
.mdictl { display: flex; gap: 5px; padding: 6px 3px 0 0; }
.mdictl .ic { stroke: #6a6f78; }

.grip {
  width: 9px; height: 17px; flex: none;
  background: repeating-linear-gradient(#b9bdc6 0 3px, transparent 3px 5px) 3px 0 / 3px 100% no-repeat;
}
.toolrow { display: flex; gap: 2px; height: 26px; padding-top: 1px; border-bottom: 1px solid #bcc2cd; }
.bar {
  display: flex; align-items: center; height: 24px;
  border-radius: 3px;
  background: linear-gradient(#f3f3f7, #e9eaf0 50%, #d6d9e2);
}
.bar > button { width: 22px; height: 22px; }
.bar .ic, .vbar .ic, .views .ic, .net .ic { width: 18px; height: 18px; }
.sep { width: 2px; height: 14px; margin: 0 3px; background: linear-gradient(90deg, #b9bdc8 50%, #fff 50%); }
.bar > .more {
  width: 12px; height: 24px; border-radius: 0 3px 3px 0;
  background: #b0b6c1; align-items: flex-end; padding-bottom: 3px;
}
.bar > .more::before {
  content: ""; width: 7px; height: 7px; background: #6c727d;
  clip-path: polygon(0 0, 100% 0, 100% 20%, 0 20%, 0 45%, 100% 45%, 50% 100%, 0 45%);
}

.work { display: flex; flex: 1; min-height: 0; padding-top: 1px; }
.side { display: flex; flex-direction: column; width: 26px; padding-right: 2px; }
.vbar {
  display: flex; flex-direction: column; align-items: center; flex: none;
  border-radius: 3px;
  background: linear-gradient(90deg, #f2f2f6, #e8e9ef 50%, #d2d6df);
}
.vbar.grow { flex: 1; min-height: 0; }
.vbar.small { height: 40px; }
.vbar.first { padding-top: 0; margin-bottom: 2px; }
.vbar > button { width: 22px; height: 22px; flex: none; }
.hgrip {
  width: 15px; height: 9px; flex: none;
  background: repeating-linear-gradient(90deg, #b4b8c1 0 2px, #fff 2px 3px, transparent 3px 4px) 0 3px / 100% 3px no-repeat;
}
.hsep { width: 14px; height: 2px; margin: 3px 0; flex: none; background: linear-gradient(#c0c3ca 50%, #fff 50%); }
.vbar > .more {
  width: 100%; height: 12px; margin-top: auto; gap: 5px; padding-left: 4px;
  border-radius: 0 0 3px 3px; background: linear-gradient(90deg, #b2b7c2, #a6acb8);
}
.vbar > .more::before {
  content: ""; width: 5px; height: 7px; background: #f4f5f8;
  clip-path: polygon(30% 0, 70% 0, 70% 20%, 30% 20%, 30% 35%, 70% 35%, 70% 55%, 100% 55%, 50% 100%, 0 55%, 30% 55%);
}
.vbar.first > .more::before { visibility: hidden; }
.vbar > .more::after {
  content: ""; width: 7px; height: 7px; background: #575d68;
  clip-path: polygon(0 0, 20% 0, 20% 100%, 0 100%, 0 0, 45% 0, 100% 50%, 45% 100%, 45% 0);
}

.viewport {
  flex: 1; min-width: 0; margin: 0 0 2px;
  border-left: 1px solid #666a70;
  background: linear-gradient(#596ca2, #7c9cbd 50%, #a6d3d7);
}
.viewport svg { display: block; width: 100%; height: 100%; }
.axes text { font: 9px "Liberation Sans", sans-serif; }

.catalog { display: flex; flex-direction: column; width: 205px; margin: 0 -2px 0 2px; padding: 0 2px 0 2px; }
.cathead {
  display: flex; align-items: center; gap: 6px;
  height: 19px; padding: 0 5px 0 4px; margin-bottom: 1px; flex: none;
  background: #b9c0cc; color: #43474f;
}
.cathead h2 { flex: 1; }
.cathead .ic { stroke: #666c78; }
.catbody { display: flex; flex: 1; min-height: 0; background: #fff; border: 1px solid #7c9cc0; }
.parts {
  flex: 1; min-width: 0; overflow: hidden; padding-top: 2px;
  display: grid; grid-template-columns: repeat(2, 75px); grid-auto-rows: 75px;
}
.parts button { flex-direction: column; justify-content: flex-start; color: #000; line-height: 13px; }
.parts .ic { width: 34px; height: 32px; stroke: #000; shape-rendering: crispEdges; margin-bottom: 5px; }
.parts span { width: 62px; text-align: center; }
.scroll {
  display: flex; flex-direction: column; width: 18px;
  background: linear-gradient(90deg, #dfeaf9, #fafcff);
}
.scroll .up, .scroll .down { height: 18px; }
.up::before, .down::before { content: ""; border: 4px solid transparent; }
.up::before { border-top: 0; border-bottom-color: #6788b0; }
.down::before { border-bottom: 0; border-top-color: #6788b0; }
.thumb {
  height: 169px; margin: 0 1px; border: 1px solid #7f90a8; border-radius: 2px;
  background: linear-gradient(90deg, #f4f6f9, #d8dee6 50%, #b4bdca);
}
.scroll .down { margin-top: auto; }
.tabs { display: flex; height: 24px; padding: 0 0 2px 2px; flex: none; color: #555a64; }
.tabs button { padding: 0 6px; }
.tabs button + button { margin-left: 1px; }
.tabs .on { background: #e9ebef; color: #333; border: 1px solid #aab4c4; border-top: 0; }

.status {
  display: flex; align-items: center; height: 23px; margin: 0 -2px 0 -3px; flex: none;
  border-top: 1px solid #8d929c;
  background: linear-gradient(#e4e6ea, #c6c9cf 35%, #abafb7 50%, #c4c8ce);
}
.hint { flex: 1; padding-left: 4px; }
.info {
  display: flex; gap: 24px; width: 243px; height: 20px; padding: 2px 0 0 14px;
  border-left: 1px solid #888d96;
}
.views { display: flex; width: 260px; border-left: 1px solid #9a9ea6; height: 20px; margin-right: 3px; }
.views button { width: 22px; height: 20px; flex: none; }
.views .dd { width: 13px; }
.dd::before { content: ""; border: 3px solid transparent; border-top-color: #666b74; border-bottom: 0; }
.views .act { background: linear-gradient(#ffe0a8, #ffc877); border: 1px solid #e0a860; }
.views .gap { margin-left: 4px; }
.status select {
  appearance: none; height: 19px; margin: 0 2px 0 0; padding: 0 0 0 3px;
  font: inherit; color: #111; border: 1px solid #f4f5f7; border-radius: 0;
  background: conic-gradient(from -45deg at 50% 100%, #777c86 90deg, #e3e5e8 0) right 4px top 7px / 6px 3px no-repeat #e3e5e8;
}
.status .s1 { width: 88px; }
.status .s2 { width: 62px; }
.net { width: 24px; height: 20px; }
.resize {
  width: 12px; height: 12px; margin: 4px 5px 0 6px;
  background: radial-gradient(circle, #777c86 1px, transparent 2px) 0 0 / 4px 4px;
  clip-path: polygon(100% 0, 100% 100%, 0 100%);
}

.mark {
  position: absolute; right: 8px; bottom: 6px;
  display: flex; flex-direction: column; align-items: center;
  color: #19b3df; pointer-events: none;
}
.mark b { font: 700 30px/32px "Noto Sans CJK SC", sans-serif; }
.mark span { font: 16px/16px "DejaVu Sans", sans-serif; opacity: .8; }
```
